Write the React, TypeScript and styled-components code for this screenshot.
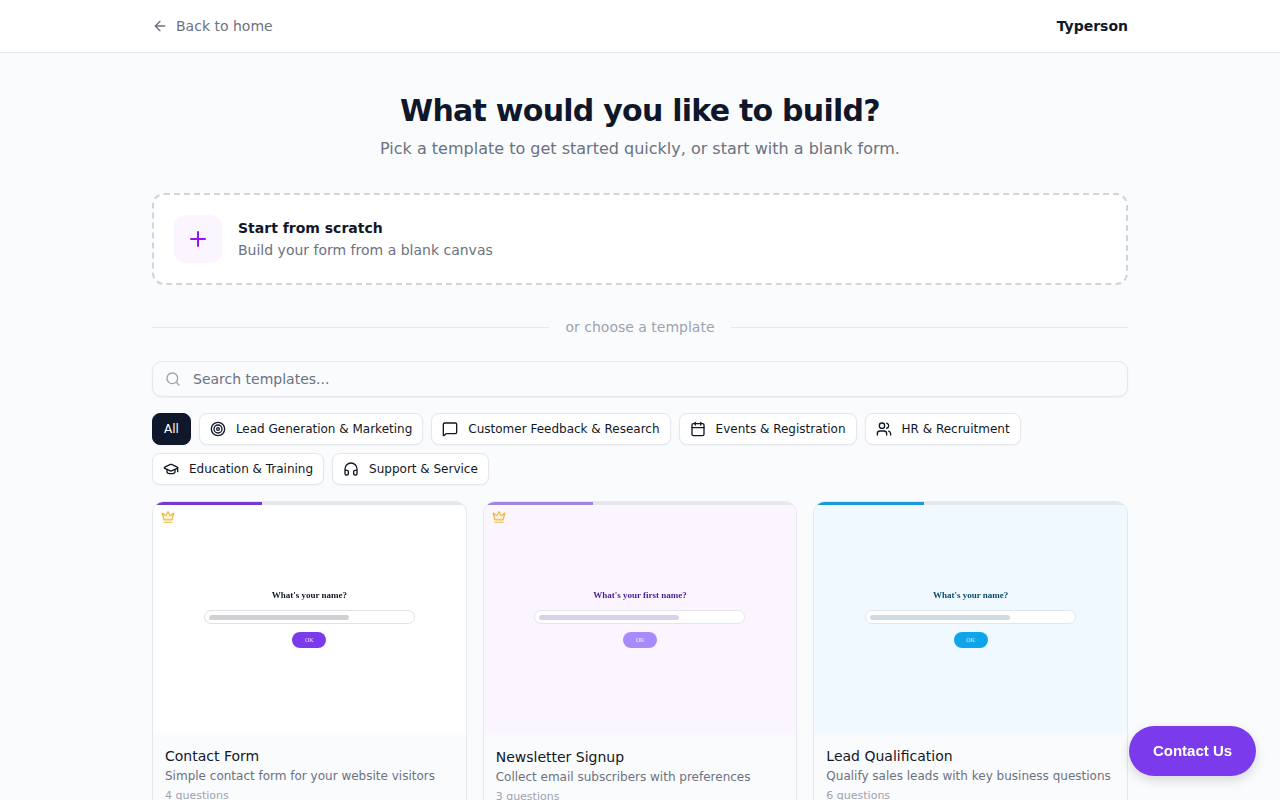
import React from "react";
import styled, { createGlobalStyle } from "styled-components";
import {
  ArrowLeft,
  Plus,
  Search,
  Target,
  MessageSquare,
  Calendar,
  Users,
  GraduationCap,
  Headphones,
  Crown,
} from "lucide-react";

const Global = createGlobalStyle`
  * { box-sizing: border-box; }
  html, body { margin: 0; padding: 0; background: #fafbfd; }
  html { scrollbar-width: none; }
  body { font-family: "DejaVu Sans", sans-serif; color: #111827; }
`;

const Page = styled.div`
  min-height: 100vh;
  background: #fafbfd;
`;

const Header = styled.header`
  height: 53px;
  background: #fff;
  border-bottom: 1px solid #e5e7eb;
`;

const HeaderInner = styled.div`
  width: 976px;
  height: 100%;
  margin: 0 auto;
  display: flex;
  align-items: center;
  justify-content: space-between;
`;

const BackLink = styled.a`
  display: flex;
  align-items: center;
  gap: 8px;
  font-size: 14px;
  color: #6b7280;
`;

const Brand = styled.span`
  font-size: 14px;
  font-weight: 700;
  color: #111827;
`;

const Main = styled.main`
  width: 976px;
  margin: 0 auto;
  padding-top: 40px;
`;

const Title = styled.h1`
  margin: 0;
  text-align: center;
  font-size: 30px;
  line-height: 36px;
  letter-spacing: -0.75px;
  font-weight: 700;
  color: #0f172a;
`;

const Subtitle = styled.p`
  margin: 8px 0 0;
  text-align: center;
  font-size: 16px;
  line-height: 24px;
  color: #6b7280;
`;

const ScratchCard = styled.div`
  margin-top: 32px;
  height: 92px;
  display: flex;
  align-items: center;
  gap: 16px;
  padding: 0 20px;
  background: #fff;
  border: 2px dashed #d1d5db;
  border-radius: 12px;
`;

const ScratchIcon = styled.div`
  width: 48px;
  height: 48px;
  flex: none;
  display: flex;
  align-items: center;
  justify-content: center;
  border-radius: 12px;
  background: #faf5ff;
  color: #9810fa;
`;

const ScratchTitle = styled.div`
  font-size: 14px;
  line-height: 20px;
  font-weight: 700;
  color: #111827;
`;

const ScratchDesc = styled.div`
  margin-top: 2px;
  font-size: 14px;
  line-height: 20px;
  color: #6b7280;
`;

const Divider = styled.div`
  margin-top: 32px;
  height: 20px;
  display: flex;
  align-items: center;
  gap: 16px;
  font-size: 14px;
  color: #9ca3af;
  &::before,
  &::after {
    content: "";
    flex: 1;
    height: 1px;
    background: #e5e7eb;
  }
`;

const SearchBox = styled.label`
  margin-top: 24px;
  height: 36px;
  display: flex;
  align-items: center;
  gap: 12px;
  padding: 0 12px;
  background: #fafbfd;
  border: 1px solid #e5e7eb;
  border-radius: 10px;
  box-shadow: 0 1px 2px rgba(0, 0, 0, 0.05);
  color: #9ca3af;
`;

const SearchInput = styled.input`
  flex: 1;
  border: 0;
  outline: 0;
  background: transparent;
  padding: 0;
  font-family: inherit;
  font-size: 14px;
  color: #111827;
  &::placeholder {
    color: #6b7280;
    opacity: 1;
  }
`;

const Chips = styled.div`
  margin-top: 16px;
  display: flex;
  flex-wrap: wrap;
  gap: 8px;
`;

const Chip = styled.button<{ $active?: boolean }>`
  height: 32px;
  display: inline-flex;
  align-items: center;
  gap: 10px;
  padding: 0 ${(p) => (p.$active ? "11px" : "10px")};
  font-family: inherit;
  font-size: 12px;
  color: ${(p) => (p.$active ? "#fff" : "#111827")};
  background: ${(p) => (p.$active ? "#0f172a" : "#fff")};
  border: 1px solid ${(p) => (p.$active ? "#0f172a" : "#e5e7eb")};
  border-radius: 8px;
  box-shadow: 0 1px 2px rgba(0, 0, 0, 0.04);
`;

const CardGrid = styled.div`
  margin-top: 16px;
  display: grid;
  grid-template-columns: repeat(3, 1fr);
  gap: 16px;
  padding-bottom: 32px;
`;

const Card = styled.article`
  position: relative;
  overflow: hidden;
  background: #fafbfd;
  border: 1px solid #e5e7eb;
  border-radius: 12px;
`;

const Track = styled.div`
  height: 3px;
  background: #e5e7eb;
`;

const Fill = styled.div<{ $color: string }>`
  width: 35%;
  height: 100%;
  background: ${(p) => p.$color};
  filter: saturate(0.9) brightness(0.95);
`;

const Preview = styled.div<{ $bg: string }>`
  position: relative;
  height: 233px;
  background: ${(p) => p.$bg};
  font-family: "Liberation Serif", serif;
`;

const PreviewForm = styled.div`
  height: 100%;
  padding-bottom: 5px;
  display: flex;
  flex-direction: column;
  align-items: center;
  justify-content: center;
  filter: blur(0.3px);
`;

const Fade = styled.div`
  position: absolute;
  left: 0;
  right: 0;
  bottom: 0;
  height: 8px;
  background: linear-gradient(to bottom, rgba(250, 251, 253, 0), #fafbfd);
`;

const CrownBadge = styled.span`
  position: absolute;
  top: 5px;
  left: 8px;
  display: flex;
  color: #e9b949;
  filter: blur(0.3px);
  svg {
    fill: rgba(253, 230, 138, 0.45);
  }
`;

const Question = styled.div<{ $color: string }>`
  font-size: 9px;
  line-height: 11px;
  font-weight: 700;
  color: ${(p) => p.$color};
`;

const FakeInput = styled.div<{ $color: string }>`
  position: relative;
  width: 211px;
  height: 14px;
  margin-top: 9px;
  padding: 0 4px;
  display: flex;
  align-items: center;
  background: #fff;
  border: 1px solid color-mix(in srgb, ${(p) => p.$color} 13%, #fff);
  border-radius: 7px;
`;

const FakeValue = styled.div<{ $color: string }>`
  width: 140px;
  height: 5px;
  border-radius: 3px;
  background: ${(p) => p.$color};
  opacity: 0.2;
`;

const FakeButton = styled.div<{ $color: string }>`
  width: 34px;
  height: 16px;
  margin-top: 8px;
  display: flex;
  align-items: center;
  justify-content: center;
  border-radius: 8px;
  background: ${(p) => p.$color};
  color: rgba(255, 255, 255, 0.85);
  font-size: 6px;
`;

const Info = styled.div<{ $shift?: boolean }>`
  padding: ${(p) => (p.$shift ? "9px" : "8px")} 12px 16px;
`;

const CardTitle = styled.div`
  font-size: 14px;
  line-height: 20px;
  color: #111827;
`;

const CardDesc = styled.div`
  margin-top: 1px;
  font-size: 12px;
  line-height: 18px;
  color: #6b7280;
`;

const CardCount = styled.div`
  margin-top: 3px;
  font-size: 11px;
  line-height: 16px;
  color: #9ca3af;
`;

const ContactButton = styled.button`
  position: fixed;
  right: 24px;
  bottom: 24px;
  width: 127px;
  height: 50px;
  padding: 0 0 2px;
  border: 0;
  border-radius: 25px;
  background: #7c3aed;
  color: #fff;
  font-family: "Liberation Sans", Arial, sans-serif;
  font-size: 15px;
  font-weight: 700;
  box-shadow: 0 4px 12px rgba(0, 0, 0, 0.15);
`;

const chips = [
  { label: "Lead Generation & Marketing", Icon: Target },
  { label: "Customer Feedback & Research", Icon: MessageSquare },
  { label: "Events & Registration", Icon: Calendar },
  { label: "HR & Recruitment", Icon: Users },
  { label: "Education & Training", Icon: GraduationCap },
  { label: "Support & Service", Icon: Headphones },
];

const cards = [
  {
    title: "Contact Form",
    desc: "Simple contact form for your website visitors",
    count: "4 questions",
    question: "What's your name?",
    bg: "#ffffff",
    text: "#111827",
    accent: "#7c3aed",
    crown: true,
  },
  {
    title: "Newsletter Signup",
    desc: "Collect email subscribers with preferences",
    count: "3 questions",
    question: "What's your first name?",
    bg: "#faf5ff",
    text: "#4c1d95",
    accent: "#a78bfa",
    crown: true,
    shift: true,
  },
  {
    title: "Lead Qualification",
    desc: "Qualify sales leads with key business questions",
    count: "6 questions",
    question: "What's your name?",
    bg: "#f0f9ff",
    text: "#0c4a6e",
    accent: "#0ea5e9",
    crown: false,
  },
];

export default function App() {
  return (
    <Page>
      <Global />
      <Header>
        <HeaderInner>
          <BackLink>
            <ArrowLeft size={16} />
            Back to home
          </BackLink>
          <Brand>Typerson</Brand>
        </HeaderInner>
      </Header>
      <Main>
        <Title>What would you like to build?</Title>
        <Subtitle>Pick a template to get started quickly, or start with a blank form.</Subtitle>
        <ScratchCard>
          <ScratchIcon>
            <Plus size={24} />
          </ScratchIcon>
          <div>
            <ScratchTitle>Start from scratch</ScratchTitle>
            <ScratchDesc>Build your form from a blank canvas</ScratchDesc>
          </div>
        </ScratchCard>
        <Divider>or choose a template</Divider>
        <SearchBox>
          <Search size={16} />
          <SearchInput placeholder="Search templates..." />
        </SearchBox>
        <Chips>
          <Chip $active>All</Chip>
          {chips.map(({ label, Icon }) => (
            <Chip key={label}>
              <Icon size={16} />
              {label}
            </Chip>
          ))}
        </Chips>
        <CardGrid>
          {cards.map((c) => (
            <Card key={c.title}>
              <Track>
                <Fill $color={c.accent} />
              </Track>
              <Preview $bg={c.bg}>
                {c.crown && (
                  <CrownBadge>
                    <Crown size={14} />
                  </CrownBadge>
                )}
                <PreviewForm>
                  <Question $color={c.text}>{c.question}</Question>
                  <FakeInput $color={c.text}>
                    <FakeValue $color={c.text} />
                  </FakeInput>
                  <FakeButton $color={c.accent}>OK</FakeButton>
                </PreviewForm>
                <Fade />
              </Preview>
              <Info $shift={c.shift}>
                <CardTitle>{c.title}</CardTitle>
                <CardDesc>{c.desc}</CardDesc>
                <CardCount>{c.count}</CardCount>
              </Info>
            </Card>
          ))}
        </CardGrid>
      </Main>
      <ContactButton>Contact Us</ContactButton>
    </Page>
  );
}
